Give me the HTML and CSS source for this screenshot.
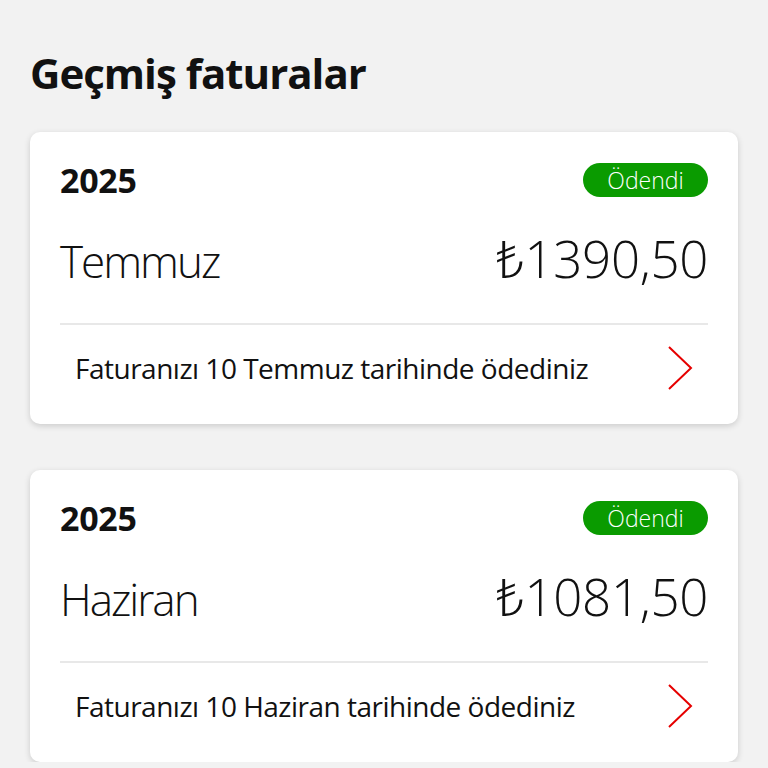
FILE: index.html
```html
<!DOCTYPE html>
<html>
<head>
    <meta charset="utf-8">
    <title>Geçmiş faturalar</title>
    <link rel="stylesheet" href="styles.css">
</head>
<body>
<section class="bills">
    <h1 class="bills_title">Geçmiş faturalar</h1>

    <div class="bill_card">
        <div class="bill_top">
            <span class="bill_year">2025</span>
            <span class="bill_status">Ödendi</span>
        </div>
        <div class="bill_main">
            <span class="bill_month">Temmuz</span>
            <span class="bill_amount">₺1390,50</span>
        </div>
        <a class="bill_foot" href="#">
            <span class="bill_note">Faturanızı 10 Temmuz tarihinde ödediniz</span>
            <svg class="bill_arrow" width="26" height="44" viewBox="0 0 26 44"><path d="M2 1 L24 22 L2 43" fill="none" stroke="#e60000" stroke-width="2"/></svg>
        </a>
    </div>

    <div class="bill_card">
        <div class="bill_top">
            <span class="bill_year">2025</span>
            <span class="bill_status">Ödendi</span>
        </div>
        <div class="bill_main">
            <span class="bill_month">Haziran</span>
            <span class="bill_amount">₺1081,50</span>
        </div>
        <a class="bill_foot" href="#">
            <span class="bill_note">Faturanızı 10 Haziran tarihinde ödediniz</span>
            <svg class="bill_arrow" width="26" height="44" viewBox="0 0 26 44"><path d="M2 1 L24 22 L2 43" fill="none" stroke="#e60000" stroke-width="2"/></svg>
        </a>
    </div>
</section>
</body>
</html>
```

FILE: styles.css
```css
body,div,span,h1,section{margin:0;padding:0}
a{text-decoration:none;color:inherit}
*{box-sizing:border-box}
html{line-height:1}
body{
    background:#f2f2f2;
    color:#111;
    font-family:"Open Sans","Noto Sans",sans-serif;
}

/* 页面容器 */
.bills{padding:52px 30px 0;display:flex;flex-direction:column;gap:46px}
.bills_title{font-size:42px;font-weight:700;letter-spacing:-1px;margin-bottom:-8px}

/* 每一张账单卡片 */
.bill_card{
    background:#fff;border-radius:10px;
    box-shadow:0 2px 6px rgba(0,0,0,.16);
    padding:30px 30px 0;
}
.bill_top{display:flex;justify-content:space-between;align-items:center;height:36px}
.bill_year{font-size:34px;font-weight:700;letter-spacing:-.3px}
.bill_status{
    background:#0a9b00;color:#fff;border-radius:17px;
    height:34px;width:125px;
    display:flex;align-items:center;justify-content:center;
    font-size:23px;font-weight:300;
}
.bill_main{
    display:flex;justify-content:space-between;align-items:baseline;
    padding:35px 0 39px;border-bottom:2px solid #e8e8e8;
}
.bill_month{font-size:44px;font-weight:300;letter-spacing:-2px}
.bill_amount{font-size:51px;font-weight:300;letter-spacing:-.3px}
.bill_foot{display:flex;justify-content:space-between;align-items:center;padding:21px 15px 34px 15px}
.bill_note{font-size:28px;font-weight:400;letter-spacing:-.5px}
.bill_arrow{display:block}
```
